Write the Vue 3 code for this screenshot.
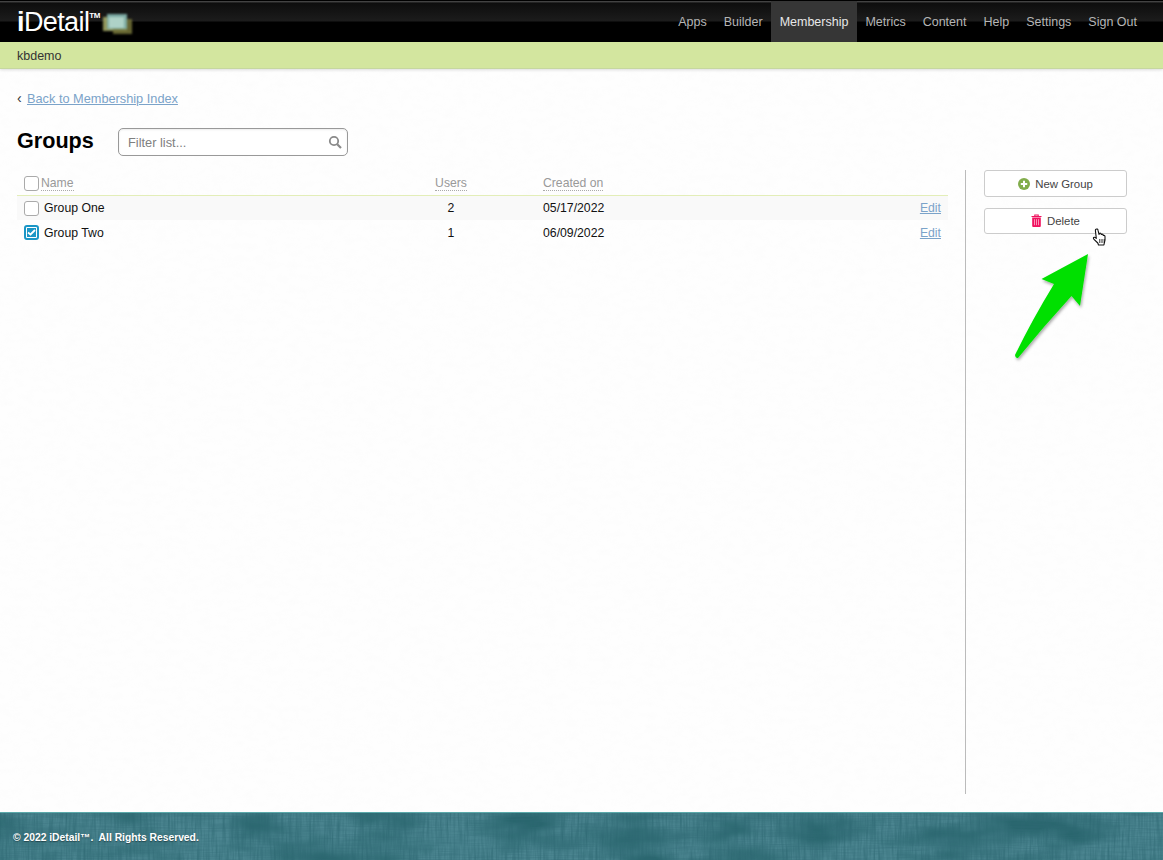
<script setup>
const nav = ['Apps', 'Builder', 'Membership', 'Metrics', 'Content', 'Help', 'Settings', 'Sign Out']
const rows = [
  { name: 'Group One', users: 2, date: '05/17/2022', checked: false },
  { name: 'Group Two', users: 1, date: '06/09/2022', checked: true }
]
</script>

<template>
  <div class="page">
    <svg class="paper" width="100%" height="100%" aria-hidden="true">
      <filter id="paper-f" x="0" y="0" width="100%" height="100%">
        <feTurbulence type="fractalNoise" baseFrequency="0.09 0.16" numOctaves="2" seed="7" />
        <feColorMatrix values="0 0 0 0 0.6  0 0 0 0 0.6  0 0 0 0 0.6  0.5 0 0 0 -0.2" />
      </filter>
      <rect width="100%" height="100%" filter="url(#paper-f)" />
    </svg>
    <header class="topbar">
      <div class="logo">
        <span class="logo-text"><b>i</b>Detail<sup>TM</sup></span>
        <svg class="logo-mark" width="29" height="20" viewBox="0 0 29 20">
          <rect x="0" y="3" width="24" height="14" fill="#a3a766" opacity=".9" />
          <rect x="10" y="5" width="19" height="15" fill="#77763a" opacity=".85" />
          <rect x="4" y="0" width="20" height="15" fill="#7fb0aa" opacity=".95" />
          <rect x="6" y="3" width="15" height="11" fill="#b4d6cb" opacity=".9" />
        </svg>
      </div>
      <nav class="nav">
        <a v-for="item in nav" :key="item" :class="{ active: item === 'Membership' }">{{ item }}</a>
      </nav>
    </header>
    <div class="subbar">kbdemo</div>

    <main class="content">
      <section class="main">
        <div class="back"><span class="chev">‹</span><a class="link">Back to Membership Index</a></div>
        <div class="title-row">
          <h1>Groups</h1>
          <div class="filter">
            <span>Filter list...</span>
            <svg width="14" height="14" viewBox="0 0 14 14" fill="none" stroke="#8a8a8a">
              <circle cx="6" cy="6" r="4.2" stroke-width="1.8" />
              <path d="M9.2 9.2 13 13" stroke-width="2.2" />
            </svg>
          </div>
        </div>
        <div class="table">
          <div class="row head">
            <div class="name-cell"><span class="check head-check"></span><span class="dotted name-head">Name</span></div>
            <div class="center"><span class="dotted">Users</span></div>
            <div class="created"><span class="dotted">Created on</span></div>
            <div></div>
          </div>
          <div v-for="(r, i) in rows" :key="r.name" class="row body" :class="{ odd: i === 0 }">
            <div class="name-cell">
              <span class="check" :class="{ on: r.checked }">
                <span v-if="r.checked" class="check-inner">
                  <svg width="9" height="7" viewBox="0 0 9 7" fill="none" stroke="#fff" stroke-width="1.800"><path d="M1 3.500l2.500 2L8 1" /></svg>
                </span>
              </span>
              <span>{{ r.name }}</span>
            </div>
            <div class="center">{{ r.users }}</div>
            <div class="created">{{ r.date }}</div>
            <a class="link edit">Edit</a>
          </div>
        </div>
      </section>

      <aside class="side">
        <button class="btn new">
          <svg width="12" height="12" viewBox="0 0 12 12">
            <circle cx="6" cy="6" r="6" fill="#82ad4c" />
            <path d="M6 2.800v6.400M2.800 6h6.400" stroke="#fff" stroke-width="2" />
          </svg>
          New Group
        </button>
        <button class="btn del">
          <svg width="11" height="13" viewBox="0 0 11 13">
            <path d="M.5 2.500h10M3.800 2.500V1h3.400v1.500" fill="none" stroke="#f0125f" stroke-width="1.100" />
            <path d="M1.200 3.500h8.600V12a1 1 0 0 1-1 1H2.200a1 1 0 0 1-1-1z" fill="#f0125f" />
            <path d="M3.500 5.200v6M5.500 5.200v6M7.500 5.200v6" stroke="#ffb3cf" stroke-width=".8" />
          </svg>
          Delete
        </button>
      </aside>
    </main>

    <footer class="footer">
      <svg class="grain" width="100%" height="100%" aria-hidden="true">
        <filter id="grain-v" x="0" y="0" width="100%" height="100%" color-interpolation-filters="sRGB">
          <feTurbulence type="fractalNoise" baseFrequency="0.5 0.03" numOctaves="3" seed="11" />
          <feColorMatrix values="0 0 0 0 0.17  0 0 0 0 0.4  0 0 0 0 0.44  1.200 0 0 0 -0.42" />
        </filter>
        <filter id="grain-h" x="0" y="0" width="100%" height="100%" color-interpolation-filters="sRGB">
          <feTurbulence type="fractalNoise" baseFrequency="0.03 0.9" numOctaves="2" seed="3" />
          <feColorMatrix values="0 0 0 0 0.2  0 0 0 0 0.42  0 0 0 0 0.47  .8 0 0 0 -0.28" />
        </filter>
        <filter id="grain-b" x="0" y="0" width="100%" height="100%" color-interpolation-filters="sRGB">
          <feTurbulence type="fractalNoise" baseFrequency="0.012 0.03" numOctaves="3" seed="21" />
          <feColorMatrix values="0 0 0 0 0.16  0 0 0 0 0.4  0 0 0 0 0.43  2.600 0 0 0 -1.050" />
        </filter>
        <rect width="100%" height="100%" filter="url(#grain-b)" />
        <rect width="100%" height="100%" filter="url(#grain-v)" />
        <rect width="100%" height="100%" filter="url(#grain-h)" />
      </svg>
      <span class="copy">© 2022 iDetail™.&nbsp; All Rights Reserved.</span>
    </footer>

    <svg class="arrow" width="90" height="120" viewBox="1010 250 90 120">
      <defs>
        <filter id="arrow-s" x="-20%" y="-20%" width="150%" height="150%">
          <feDropShadow dx="1" dy="2" stdDeviation="1.500" flood-color="#000" flood-opacity=".35" />
        </filter>
      </defs>
      <path d="M1088 254 1041.500 279 1054 284 Q1032 320 1015 355 Q1015.500 358.500 1018 358 Q1044 326 1071.500 296 L1080 306Z" fill="#00e000" filter="url(#arrow-s)" />
    </svg>
    <svg class="cursor" width="16" height="19" viewBox="0 0 16 19">
      <path d="M4 1.200c1-.6 1.800 0 2 1l1 4.300 .4-1c.8-.6 1.500-.3 1.700.4l.2 .6c.7-.6 1.500-.4 1.800.4l.2 .6c.8-.4 1.600 0 1.700 1 .2 2 0 4.500-.6 6.200l-.5 2.300H6.500L5.800 15 2 11.300C1 10.300 1.300 9.200 2.300 9.200c.6 0 1.300.5 2 1.100L3.400 2.600c-.1-.6.100-1.100.6-1.400z" fill="#fff" stroke="#111" stroke-width="1.100" stroke-linejoin="round" />
      <path d="M7.800 11v4M10 11v4M12.200 11v4" stroke="#111" stroke-width=".9" />
    </svg>
  </div>
</template>

<style scoped>
.page {
  position: relative;
  min-height: 860px;
  display: flex;
  flex-direction: column;
  background: #fefefe;
  font-family: "Liberation Sans", Arial, sans-serif;
  font-size: 12.5px;
  color: #111;
  overflow: hidden;
}
.paper {
  position: absolute;
  inset: 0;
  opacity: .12;
}
.topbar {
  position: relative;
  height: 42px;
  box-sizing: border-box;
  border-top: 1px solid #000;
  display: flex;
  justify-content: space-between;
  align-items: stretch;
  background: linear-gradient(#4a4a4a 0, #3a3a3a 1px, #0d0d0d 2px, #1c1c1c 20px, #000 21px, #000 100%);
}
.logo {
  display: flex;
  align-items: center;
  padding-left: 17px;
}
.logo-text {
  font-size: 27px;
  color: #fff;
  letter-spacing: -.6px;
  line-height: 1;
  margin-top: 1px;
}
.logo-text b { font-weight: 700; }
.logo-text sup {
  font-size: 8px;
  font-weight: 700;
  vertical-align: 13px;
  line-height: 0;
  letter-spacing: -.4px;
}
.logo-mark {
  margin: 4px 0 0 3px;
  filter: blur(1px);
}
.nav {
  display: flex;
  margin-right: 17.500px;
}
.nav a {
  display: flex;
  align-items: center;
  padding: 0 8.500px;
  color: #b5b5b5;
}
.nav a.active {
  background: #363636;
  color: #e8e8e8;
}
.subbar {
  position: relative;
  height: 27px;
  box-sizing: border-box;
  background: #d3e69f;
  border-bottom: 1px solid #c6d7a0;
  box-shadow: 0 1px 3px rgba(0, 0, 0, .14);
  padding: 1px 0 0 17px;
  line-height: 27px;
  color: #333;
}
.content {
  position: relative;
  flex: 1;
  display: flex;
  padding: 0 36px 18px 17px;
}
.main {
  width: 931px;
}
.back {
  margin-top: 22px;
  height: 15px;
  line-height: 15px;
  display: flex;
  color: #333;
}
.chev {
  width: 10px;
  font-size: 14px;
  line-height: 14px;
}
.back .link { font-size: 12.750px; }
.link {
  color: #7ba3c9;
  text-decoration: underline;
}
.title-row {
  display: flex;
  align-items: center;
  margin-top: 22px;
  height: 28px;
}
h1 {
  margin: 0 0 2px;
  width: 101px;
  font-size: 21.600px;
  line-height: 26px;
  color: #000;
}
.filter {
  width: 230px;
  height: 28px;
  box-sizing: border-box;
  border: 1px solid #999;
  border-radius: 5px;
  background: #fff;
  box-shadow: inset 0 1px 2px rgba(0, 0, 0, .08);
  display: flex;
  align-items: center;
  justify-content: space-between;
  padding: 0 5px 0 9px;
  font-size: 12.800px;
  color: #808080;
}
.filter span { padding-top: 1px; }
.table {
  margin-top: 14px;
}
.row {
  display: grid;
  grid-template-columns: 400px 68px 1fr auto;
  align-items: center;
}
.head {
  height: 26px;
  padding: 1px 7px 0 0;
  box-sizing: border-box;
  border-bottom: 1px solid #e3eeb8;
  color: #999;
  font-size: 12.200px;
}
.body {
  height: 25px;
  padding-right: 7px;
  color: #111;
  font-size: 12.250px;
}
.body.odd {
  background: #f9f9f9;
  height: 24px;
}
.name-cell {
  display: flex;
  align-items: center;
  padding-left: 7px;
}
.center { text-align: center; }
.created { padding-left: 58px; }
.dotted { border-bottom: 1px dotted #aaa; line-height: 14px; }
.name-head { margin-left: 2px; }
.check {
  flex: none;
  width: 15px;
  height: 15px;
  box-sizing: border-box;
  border: 1px solid #aaa;
  border-radius: 3px;
  background: #fff;
  margin-right: 5px;
  display: flex;
  align-items: center;
  justify-content: center;
}
.head-check { margin-right: 0; }
.check.on {
  border: 2px solid #1a96c6;
  background: #fff;
}
.check-inner {
  width: 9px;
  height: 9px;
  background: #1a96c6;
  display: flex;
  align-items: center;
  justify-content: center;
}
.side {
  margin-top: 101px;
  margin-left: 17px;
  padding-left: 18px;
  border-left: 1px solid #bbb;
  width: 143px;
  display: flex;
  flex-direction: column;
  gap: 11px;
}
.btn {
  width: 143px;
  height: 27px;
  box-sizing: border-box;
  border: 1px solid #ccc;
  border-radius: 3px;
  background: #fff;
  font: 11.400px "Liberation Sans", Arial, sans-serif;
  color: #444;
  display: flex;
  align-items: center;
  justify-content: center;
  gap: 5px;
  padding: 0;
}
.btn.del {
  height: 26px;
  padding-bottom: 1px;
}
.footer {
  position: relative;
  height: 48px;
  box-sizing: border-box;
  background: #4b8590;
  border-top: 1px solid #5aa9aa;
  display: flex;
  align-items: center;
  padding: 2px 0 0 13px;
  overflow: hidden;
}
.grain {
  position: absolute;
  inset: 0;
}
.copy {
  position: relative;
  font-size: 10.300px;
  font-weight: 700;
  color: #fff;
  text-shadow: 0 1px 1px rgba(0, 0, 0, .4);
}
.arrow {
  position: absolute;
  left: 1010px;
  top: 250px;
}
.cursor {
  position: absolute;
  left: 1092px;
  top: 228px;
}
</style>
